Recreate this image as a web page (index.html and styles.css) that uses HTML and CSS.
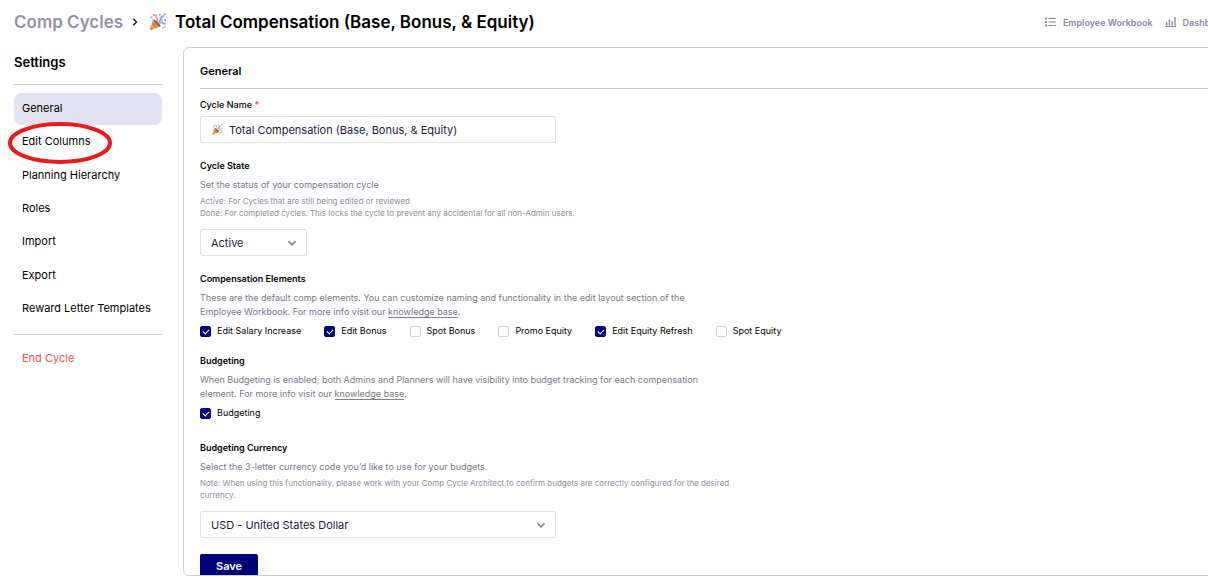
FILE: index.html
```html
<!DOCTYPE html>
<html lang="en">
<head>
    <meta charset="UTF-8">
    <meta name="viewport" content="width=device-width, initial-scale=1.0">
    <title>Comp Cycles - Settings</title>
    <link rel="stylesheet" href="styles.css">
</head>
<body>
    <svg class="sprite" aria-hidden="true">
        <symbol id="party" viewBox="0 0 18 18">
            <path d="M4.2 6.6 L11.4 13.6 L2 17 Q.6 17.4 1 16 Z" fill="#f5a836"/>
            <path d="M3.6 9.6 L8.4 14.4 L7 15 L3 11.2 Z" fill="#9a7aa0"/>
            <path d="M2.2 13.4 L4.8 16 L2 17 Q.6 17.4 1 16 Z" fill="#d98a3c"/>
            <ellipse cx="7.9" cy="10.1" rx="1.5" ry="4.8" transform="rotate(-45 7.9 10.1)" fill="#a5643a"/>
            <path d="M8 8.5 Q9.5 6 7.5 4.5 Q6 3 7.5 1.5" fill="none" stroke="#ee7fbd" stroke-width="1.4"/>
            <path d="M9.5 8.5 Q12 8 12 5.5 Q12.2 3 15 3.2" fill="none" stroke="#5cb8f7" stroke-width="1.7"/>
            <path d="M10 10.5 Q12 8.5 13.8 10 Q15.5 11.5 17 10.5" fill="none" stroke="#5cb8f7" stroke-width="1.6"/>
            <path d="M1.5 3.5h2v1.6h-2z M10 1h1.6v1.6H10z" fill="#4fb0f5"/>
            <path d="M4 1.2h1.6v1.6H4z M15.4 6.3H17v1.6h-1.6z M15 .8h1.6v1.4H15z" fill="#f0569f"/>
            <path d="M3 6h1.5v1.5H3z M13 14h1.8v1.6H13z M9.8 4.2h1.4v1.4H9.8z" fill="#f7b733"/>
            <path d="M15.2 13h1.5v1.4h-1.5z M12.6 6.8H14v1.4h-1.4z" fill="#ee7fbd"/>
        </symbol>
        <symbol id="chevron" viewBox="0 0 10 10">
            <path d="M1.5 3.2 L5 6.8 L8.5 3.2" fill="none" stroke="#718096" stroke-width="1.6"/>
        </symbol>
    </svg>

    <div class="page">
        <header class="header">
            <h1 class="breadcrumb">
                <a href="#" class="crumb-link">Comp Cycles</a>
                <svg class="crumb-arrow" viewBox="0 0 6 8"><path d="M1.2 .8 L4.6 4 L1.2 7.2" fill="none" stroke="#111" stroke-width="1.3"/></svg>
                <svg class="crumb-emoji"><use href="#party"/></svg>
                <span>Total Compensation (Base, Bonus, &amp; Equity)</span>
            </h1>
            <nav class="top-links">
                <a href="#">
                    <svg width="11" height="10" viewBox="0 0 11 10" fill="#8d879f"><path d="M0 .5h2v2H0zM0 4h2v2H0zM0 7.5h2v2H0zM3.5 1H11v1H3.5zM3.5 4.5H11v1H3.5zM3.5 8H11v1H3.5z"/></svg>
                    Employee Workbook
                </a>
                <a href="#">
                    <svg width="11" height="10" viewBox="0 0 11 10" fill="#8d879f"><path d="M0 9h11v1H0zM1 5h1.4v3.4H1zM3.7 2.4h1.4v6H3.7zM6.4 4h1.4v4.4H6.4zM9.3 0h1.4v8.4H9.3z"/></svg>
                    Dashboard
                </a>
            </nav>
        </header>

        <div class="layout">
            <aside class="sidebar">
                <h2 class="sidebar-title">Settings</h2>
                <ul class="menu">
                    <li><a href="#" class="active">General</a></li>
                    <li>
                        <a href="#">Edit Columns</a>
                        <svg class="marker" viewBox="0 0 104 42"><ellipse cx="52" cy="21" rx="50" ry="19" fill="none" stroke="#e81c1c" stroke-width="4"/></svg>
                    </li>
                    <li><a href="#">Planning Hierarchy</a></li>
                    <li><a href="#">Roles</a></li>
                    <li><a href="#">Import</a></li>
                    <li><a href="#">Export</a></li>
                    <li><a href="#">Reward Letter Templates</a></li>
                </ul>
                <a href="#" class="end-cycle">End Cycle</a>
            </aside>

            <main class="panel">
                <h2 class="panel-title">General</h2>
                <form class="settings-form">
                    <section>
                        <label class="title name-label" for="cycleName">Cycle Name <span class="required">*</span></label>
                        <div class="field wide">
                            <svg class="field-emoji"><use href="#party"/></svg>
                            <input class="with-emoji" type="text" id="cycleName" value="Total Compensation (Base, Bonus, &amp; Equity)">
                        </div>
                    </section>

                    <section>
                        <label class="title" for="cycleState">Cycle State</label>
                        <p class="help">Set the status of your compensation cycle</p>
                        <p class="note">Active: For Cycles that are still being edited or reviewed<br>Done: For completed cycles. This locks the cycle to prevent any accidental for all non-Admin users.</p>
                        <div class="field narrow">
                            <select id="cycleState">
                                <option>Active</option>
                                <option>Done</option>
                            </select>
                            <svg class="chevron"><use href="#chevron"/></svg>
                        </div>
                    </section>

                    <section>
                        <h3 class="title">Compensation Elements</h3>
                        <p class="help">These are the default comp elements. You can customize naming and functionality in the edit layout section of the Employee Workbook. For more info visit our <a href="#">knowledge base</a>.</p>
                        <div class="checks">
                            <label><input type="checkbox" checked>Edit Salary Increase</label>
                            <label><input type="checkbox" checked>Edit Bonus</label>
                            <label><input type="checkbox">Spot Bonus</label>
                            <label><input type="checkbox">Promo Equity</label>
                            <label><input type="checkbox" checked>Edit Equity Refresh</label>
                            <label><input type="checkbox">Spot Equity</label>
                        </div>
                    </section>

                    <section>
                        <h3 class="title">Budgeting</h3>
                        <p class="help">When Budgeting is enabled, both Admins and Planners will have visibility into budget tracking for each compensation element. For more info visit our <a href="#">knowledge base</a>.</p>
                        <div class="checks">
                            <label><input type="checkbox" checked>Budgeting</label>
                        </div>
                    </section>

                    <section class="currency">
                        <label class="title" for="currency">Budgeting Currency</label>
                        <p class="help">Select the 3-letter currency code you’d like to use for your budgets.</p>
                        <p class="note">Note: When using this functionality, please work with your Comp Cycle Architect to confirm budgets are correctly configured for the desired currency.</p>
                        <div class="field wide">
                            <select id="currency">
                                <option>USD - United States Dollar</option>
                            </select>
                            <svg class="chevron"><use href="#chevron"/></svg>
                        </div>
                    </section>

                    <button type="submit" class="save">Save</button>
                </form>
            </main>
        </div>
    </div>
</body>
</html>
```
FILE: styles.css
```css
* {
    box-sizing: border-box;
}
body {
    margin: 0;
    overflow: hidden;
    background: #fff;
    color: #000;
    font-family: Inter, sans-serif;
    font-size: 11px;
}
h1, h2, h3, p, ul {
    margin: 0;
    padding: 0;
}
a {
    color: inherit;
    text-decoration: none;
}
svg {
    flex-shrink: 0;
}
.sprite {
    position: absolute;
    width: 0;
    height: 0;
}
.page {
    display: flex;
    flex-direction: column;
    min-width: 1250px;
    height: 100vh;
    padding: 0 14px 3px;
}

/* header */
.header {
    display: flex;
    align-items: center;
    justify-content: space-between;
    height: 44px;
    margin-bottom: 3px;
    flex-shrink: 0;
}
.breadcrumb {
    display: flex;
    align-items: center;
    font-size: 17px;
    font-weight: 600;
    font-optical-sizing: none;
    line-height: 24px;
}
.crumb-link {
    color: #9691a4;
}
.crumb-arrow {
    width: 6px;
    height: 8px;
    margin: 0 11px 0 9px;
}
.crumb-emoji {
    width: 18px;
    height: 18px;
    margin-right: 8px;
}
.top-links {
    display: flex;
    gap: 12px;
    margin-right: 6px;
    color: #8d879f;
    font-size: 9px;
    font-weight: 600;
}
.top-links a {
    display: flex;
    align-items: center;
    gap: 7px;
}

/* sidebar */
.layout {
    display: flex;
    flex: 1;
    gap: 21px;
    min-height: 0;
}
.sidebar {
    width: 148px;
    flex-shrink: 0;
}
.sidebar-title {
    padding: 6px 0 13px;
    border-bottom: 1px solid #cfcdd8;
    font-size: 13px;
    font-weight: 600;
    line-height: 18px;
}
.menu {
    display: flex;
    flex-direction: column;
    justify-content: space-between;
    min-height: 232px;
    margin: 8px 0 9px;
    list-style: none;
}
.menu li {
    position: relative;
}
.menu a {
    display: block;
    padding: 0 8px 2px;
    border-radius: 8px;
    line-height: 30px;
}
.menu .active {
    background: #e3e2f0;
}
.marker {
    position: absolute;
    top: -4px;
    left: -6px;
    width: 104px;
    height: 42px;
    pointer-events: none;
}
.end-cycle {
    display: block;
    padding: 15px 8px;
    border-top: 1px solid #cfcdd8;
    color: #e9514b;
    line-height: 16px;
}

/* settings panel */
.panel {
    flex: 1;
    padding: 0 16px;
    border: 1px solid #d0ced8;
    border-radius: 6px;
    overflow: hidden;
}
.panel-title {
    padding: 16px 0 9px;
    border-bottom: 1px solid #cfcdd8;
    margin-bottom: 9px;
    font-size: 11px;
    font-weight: 600;
    line-height: 15px;
}
.settings-form {
    display: flex;
    flex-direction: column;
    align-items: flex-start;
    gap: 16px;
}
section {
    width: 540px;
}
.title {
    display: block;
    font-size: 9px;
    font-weight: 600;
    line-height: 14px;
}
.name-label {
    margin-bottom: 4px;
    font-weight: 500;
}
.required {
    color: #f0433a;
}
.help {
    max-width: 520px;
    margin-top: 5px;
    color: #7b758a;
    font-size: 9px;
    line-height: 14px;
}
.help a {
    border-bottom: 1px solid #837d90;
}
.note {
    margin: 3px 0 10px;
    color: #918b9e;
    font-size: 8px;
    line-height: 12px;
}
.field {
    position: relative;
    height: 27px;
}
.wide {
    width: 356px;
}
.narrow {
    width: 107px;
}
.field input, .field select {
    display: block;
    width: 100%;
    height: 100%;
    padding: 0 10px;
    border: 1px solid #e0e0e7;
    border-radius: 2px;
    background: #fff;
    color: #1c1747;
    font: inherit;
    appearance: none;
}
.field .with-emoji {
    padding-left: 28px;
}
.field-emoji {
    position: absolute;
    top: 8px;
    left: 12px;
    width: 11px;
    height: 11px;
}
.chevron {
    position: absolute;
    top: 9px;
    right: 10px;
    width: 10px;
    height: 10px;
    pointer-events: none;
}
.checks {
    display: flex;
    gap: 23px;
    margin-top: 5px;
    font-size: 9px;
    line-height: 14px;
    white-space: nowrap;
}
.checks label {
    display: flex;
    align-items: center;
    gap: 6px;
}
.checks input {
    position: relative;
    width: 11px;
    height: 11px;
    margin: 0;
    border: 1px solid #cfcdd8;
    border-radius: 2px;
    appearance: none;
}
.checks input:checked {
    border-color: #000078;
    background: #000078;
}
.checks input:checked::after {
    content: "";
    position: absolute;
    top: 2px;
    left: 2px;
    width: 5px;
    height: 3px;
    border-left: 1px solid #fff;
    border-bottom: 1px solid #fff;
    transform: rotate(-45deg);
}
.currency {
    margin-top: 5px;
}
.save {
    padding: 0 16px;
    border: 0;
    border-radius: 2px;
    background: #000078;
    color: #fff;
    font: inherit;
    font-weight: 600;
    line-height: 25px;
}
```
